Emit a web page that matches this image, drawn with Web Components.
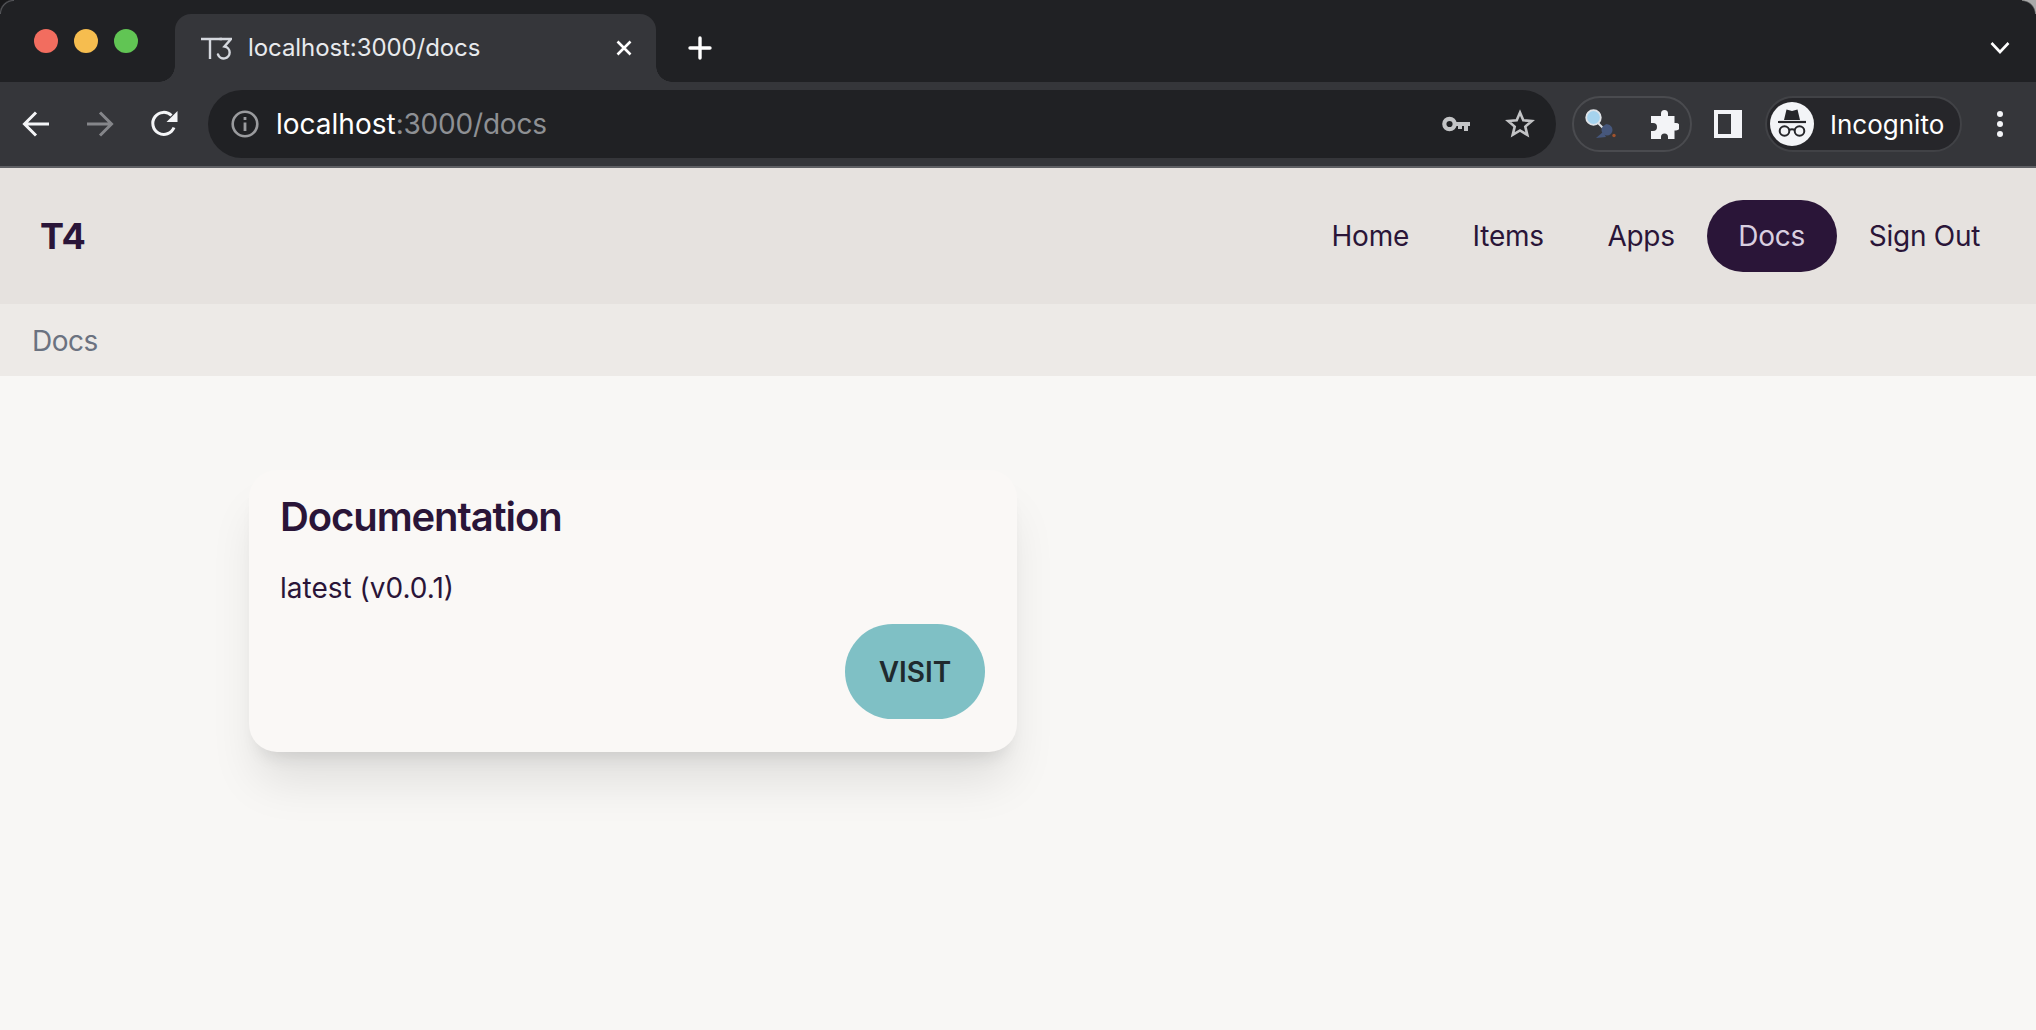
<!DOCTYPE html>
<html lang="en">
<head>
<meta charset="utf-8">
<title>T4 Docs</title>
<style>
  html, body { margin: 0; height: 100%; background: #f8f7f5; overflow: hidden; }
  body { font-family: Inter, "Liberation Sans", sans-serif; display: flex; flex-direction: column; }
</style>
</head>
<body>
<browser-tabstrip title-text="localhost:3000/docs"></browser-tabstrip>
<browser-toolbar></browser-toolbar>
<site-nav>
  <nav-link>Home</nav-link>
  <nav-link>Items</nav-link>
  <nav-link>Apps</nav-link>
  <nav-link active>Docs</nav-link>
  <nav-link>Sign Out</nav-link>
</site-nav>
<bread-crumb>Docs</bread-crumb>
<page-main>
  <doc-card heading="Documentation" version="latest (v0.0.1)" action="VISIT"></doc-card>
</page-main>

<script>
class BrowserTabstrip extends HTMLElement {
  constructor() {
    super();
    const root = this.attachShadow({ mode: "open" });
    root.innerHTML = `
    <style>
    :host { display: flex; height: 82px; background: #202124; flex: none; position: relative; }
    :host::before, :host::after { content: ""; position: absolute; top: 0; width: 14px; height: 14px; }
    :host::before { left: 0; background: radial-gradient(circle at 100% 100%, transparent 12.5px, #55565a 13.5px, #18181a 15px); }
    :host::after { right: 0; background: radial-gradient(circle at 0 100%, transparent 12.5px, #a9a9a9 14px); }
    .lights { width: 175px; flex: none; display: flex; gap: 16px; padding: 29px 0 0 34px; box-sizing: border-box; }
    .lights i { width: 24px; height: 24px; border-radius: 50%; display: block; }
    .tab {
      width: 481px; flex: none; margin-top: 14px; background: #35363a; border-radius: 16px 16px 0 0;
      display: flex; align-items: center; padding: 0 24px 0 26px; box-sizing: border-box; position: relative;
      color: #e8eaed; font-size: 24px; letter-spacing: -0.08px; font-family: Inter, sans-serif;
    }
    .tab::before, .tab::after { content: ""; position: absolute; bottom: 0; width: 16px; height: 16px; }
    .tab::before { left: -16px; background: radial-gradient(circle at 0 0, transparent 15.5px, #35363a 16px); }
    .tab::after { right: -16px; background: radial-gradient(circle at 100% 0, transparent 15.5px, #35363a 16px); }
    .title { margin: 0 0 2px 16px; flex: 1; white-space: nowrap; }
    .plus { margin: 34px 0 0 30px; width: 28px; height: 28px; }
    .chev { margin: 38px 26px 0 auto; width: 20px; height: 20px; }
    </style>
    <div class="lights">
      <i style="background:#f26d5f"></i><i style="background:#f6bd4f"></i><i style="background:#61c554"></i>
    </div>
    <div class="tab">
      <svg width="31" height="23" viewBox="0 0 31 23" fill="none" stroke="#d5d8de" stroke-width="2.4">
        <path d="M0 2H21M9 2V22"/>
        <path d="M19 2H30L23.5 9.5A6 6 0 1 1 17 17.5" stroke-linecap="round"/>
      </svg>
      <span class="title"></span>
      <svg width="16" height="16" viewBox="0 0 16 16" stroke="#fff" stroke-width="2.6"><path d="M1.5 1.5L14.5 14.5M14.5 1.5L1.5 14.5"/></svg>
    </div>
    <svg class="plus" viewBox="0 0 28 28" stroke="#fff" stroke-width="3.4" stroke-linecap="round"><path d="M14 4V24M4 14H24"/></svg>
    <svg class="chev" viewBox="0 0 20 20" fill="none" stroke="#fff" stroke-width="2.6"><path d="M1.5 5L10 14L18.500 5"/></svg>
    `;
    root.querySelector(".title").textContent = this.getAttribute("title-text");
  }
}

class BrowserToolbar extends HTMLElement {
  constructor() {
    super();
    const root = this.attachShadow({ mode: "open" });
    root.innerHTML = `
    <style>
    :host {
      display: flex; align-items: center; height: 86px; flex: none; background: #35363a; box-sizing: border-box;
      padding: 0 4px; border-bottom: 2px solid #5f6064; color: #fff; font-family: Inter, sans-serif;
    }
    .btn { width: 64px; height: 64px; flex: none; display: flex; align-items: center; justify-content: center; }
    .url {
      width: 1348px; height: 68px; flex: none; margin-left: 12px; border-radius: 34px; background: #202124;
      display: flex; align-items: center; padding: 0 21px 0 23px; box-sizing: border-box;
    }
    .text { margin-left: 17px; font-size: 28px; flex: 1; white-space: nowrap; color: #fff; }
    .text span { color: #8e9094; letter-spacing: -0.2px; }
    .key { margin-right: 35px; }
    .ext {
      width: 120px; height: 56px; flex: none; margin-left: 16px; border: 2px solid #4a4b4f; border-radius: 28px; box-sizing: border-box;
      display: flex; align-items: center; gap: 34px; padding-left: 11px;
    }
    .side { margin-left: 22px; flex: none; }
    .profile {
      width: 197px; height: 56px; flex: none; margin-left: 23px; background: #26262a; border: 2px solid #414246; border-radius: 28px; box-sizing: border-box;
      display: flex; align-items: center; padding-left: 3px; font-size: 26px; color: #fff;
    }
    .avatar { flex: none; margin-right: 16px; }
    .dots { margin-left: 34px; }
    </style>
    <div class="btn"><svg width="28" height="26" viewBox="0 0 28 26" fill="none" stroke="#f4f5f7" stroke-width="3"><path d="M27 13H3M14 1.500L2.500 13L14 24.500"/></svg></div>
    <div class="btn"><svg width="28" height="26" viewBox="0 0 28 26" fill="none" stroke="#85868a" stroke-width="3"><path d="M1 13H25M14 1.500L25.500 13L14 24.500"/></svg></div>
    <div class="btn"><svg width="28" height="28" viewBox="0 0 28 28" fill="none"><path d="M24 17.500A11 11 0 1 1 21.500 5.500" stroke="#f4f5f7" stroke-width="3"/><path d="M27.500 1V12H16.500Z" fill="#f4f5f7"/></svg></div>
    <div class="url">
      <svg width="28" height="28" viewBox="0 0 28 28" fill="none"><circle cx="14" cy="14" r="12.300" stroke="#9a9b9e" stroke-width="2.600"/><path d="M14 12.500V21M14 7V10" stroke="#9a9b9e" stroke-width="2.800"/></svg>
      <div class="text">localhost<span>:3000/docs</span></div>
      <svg class="key" width="28" height="16" viewBox="0 0 28 16" fill="none"><circle cx="7.500" cy="8" r="5.200" stroke="#c3c4c6" stroke-width="4.200"/><path d="M12 6H28V10H26V15H22V10H20V13H16V10H12Z" fill="#c3c4c6"/></svg>
      <svg width="30" height="30" viewBox="0 0 30 30" fill="none"><path d="M15 3.500L18.300 11.300L26.800 12L20.300 17.600L22.300 25.900L15 21.500L7.700 25.900L9.700 17.600L3.200 12L11.700 11.300Z" stroke="#c3c4c6" stroke-width="2.600" stroke-linejoin="miter"/></svg>
    </div>
    <div class="ext">
      <svg width="31" height="31" viewBox="0 0 31 31">
        <circle cx="8.500" cy="8.500" r="7.300" fill="#a6d3ee" stroke="#dfe3e8" stroke-width="1.800"/>
        <path d="M13 14L19 20" stroke="#dfe3e8" stroke-width="2"/>
        <circle cx="22" cy="21" r="5.500" fill="#46577c"/>
        <path d="M18 23L11 29L21 28Z" fill="#46577c"/>
        <path d="M20 15L25 16L24 19Z" fill="#46577c"/>
        <circle cx="29" cy="26.500" r="1.700" fill="#a0522d"/>
      </svg>
      <svg width="29" height="29" viewBox="0 0 29 29"><path d="M11 3.500A3.500 3.500 0 0 1 18 3.500V6H24.500V13H26A3.500 3.500 0 0 1 26 20.500H24.500V29H18V27A3.500 3.500 0 0 0 11 27V29H1V21H3A4 4 0 0 0 3 13H1V6H11Z" fill="#f3f4f7"/></svg>
    </div>
    <svg class="side" width="28" height="28" viewBox="0 0 28 28"><path fill-rule="evenodd" d="M0 0H28V28H0ZM4 4V24H17V4Z" fill="#f3f4f7"/></svg>
    <div class="profile">
      <svg class="avatar" width="44" height="44" viewBox="0 0 44 44">
        <circle cx="22" cy="22" r="22" fill="#f3f4f7"/>
        <path d="M14 18L16.500 7.500L22 9L27.500 7.500L30 18Z" fill="#26262a"/>
        <path d="M8 20H36" stroke="#26262a" stroke-width="2.200"/>
        <g fill="none" stroke="#26262a" stroke-width="2"><circle cx="14.500" cy="29" r="4.800"/><circle cx="29.500" cy="29" r="4.800"/><path d="M19 28Q22 26.500 25 28"/></g>
      </svg>
      Incognito
    </div>
    <svg class="dots" width="8" height="28" viewBox="0 0 8 28" fill="#f3f4f7"><circle cx="4" cy="4" r="3"/><circle cx="4" cy="14" r="3"/><circle cx="4" cy="24" r="3"/></svg>
    `;
  }
}

class SiteNav extends HTMLElement {
  constructor() {
    super();
    const root = this.attachShadow({ mode: "open" });
    root.innerHTML = `
    <style>
    :host {
      display: flex; align-items: center; justify-content: space-between; height: 136px; flex: none; background: #e6e2df;
      padding: 0 24px 0 40px; box-sizing: border-box; color: #2a1538; font-family: Inter, sans-serif;
    }
    .brand { font-size: 36px; font-weight: 700; }
    .links { display: flex; align-items: center; }
    </style>
    <div class="brand">T4</div>
    <div class="links"><slot></slot></div>
    `;
  }
}

class NavLink extends HTMLElement {
  constructor() {
    super();
    const root = this.attachShadow({ mode: "open" });
    root.innerHTML = `
    <style>
    :host { display: block; padding: 0 31.8px; height: 72px; line-height: 72px; border-radius: 36px; font-size: 28px; letter-spacing: -0.25px; color: #2a1538; }
    :host([active]) { background: #2a1538; color: #d9cfe0; }
    </style>
    <slot></slot>
    `;
  }
}

class BreadCrumb extends HTMLElement {
  constructor() {
    super();
    const root = this.attachShadow({ mode: "open" });
    root.innerHTML = `
    <style>
    :host {
      display: flex; align-items: center; height: 72px; flex: none; background: #edeae7; padding: 1px 32px 0; box-sizing: border-box;
      color: #6b7280; font-size: 28px; letter-spacing: -0.5px; font-family: Inter, sans-serif;
    }
    </style>
    <slot></slot>
    `;
  }
}

class PageMain extends HTMLElement {
  constructor() {
    super();
    const root = this.attachShadow({ mode: "open" });
    root.innerHTML = `
    <style>
    :host { display: block; flex: 1; padding: 94px 0 0 249px; box-sizing: border-box; background: #f8f7f5; }
    </style>
    <slot></slot>
    `;
  }
}

class DocCard extends HTMLElement {
  constructor() {
    super();
    const root = this.attachShadow({ mode: "open" });
    root.innerHTML = `
    <style>
    :host {
      display: flex; flex-direction: column; width: 768px; height: 282px; box-sizing: border-box; padding: 21px 32px 33px 31px;
      background: #faf8f6; border-radius: 28px; color: #2a1538; font-family: Inter, sans-serif;
      box-shadow: 0 36px 48px -8px rgba(0,0,0,.1), 0 14px 17px -10px rgba(0,0,0,.1);
    }
    h2 { margin: 0; font-size: 40px; line-height: 52px; font-weight: 600; letter-spacing: -1.1px; }
    p { margin: 27px 0 0; font-size: 28px; line-height: 36px; }
    .actions { margin-top: auto; display: flex; justify-content: flex-end; }
    button {
      width: 140px; height: 95px; border: 0; border-radius: 48px; background: #7fc0c5; color: #1f2a2e;
      font: 600 28px Inter, sans-serif; padding: 0;
    }
    </style>
    <h2></h2>
    <p></p>
    <div class="actions"><button></button></div>
    `;
    root.querySelector("h2").textContent = this.getAttribute("heading");
    root.querySelector("p").textContent = this.getAttribute("version");
    root.querySelector("button").textContent = this.getAttribute("action");
  }
}

customElements.define("browser-tabstrip", BrowserTabstrip);
customElements.define("browser-toolbar", BrowserToolbar);
customElements.define("site-nav", SiteNav);
customElements.define("nav-link", NavLink);
customElements.define("bread-crumb", BreadCrumb);
customElements.define("page-main", PageMain);
customElements.define("doc-card", DocCard);
</script>
</body>
</html>
